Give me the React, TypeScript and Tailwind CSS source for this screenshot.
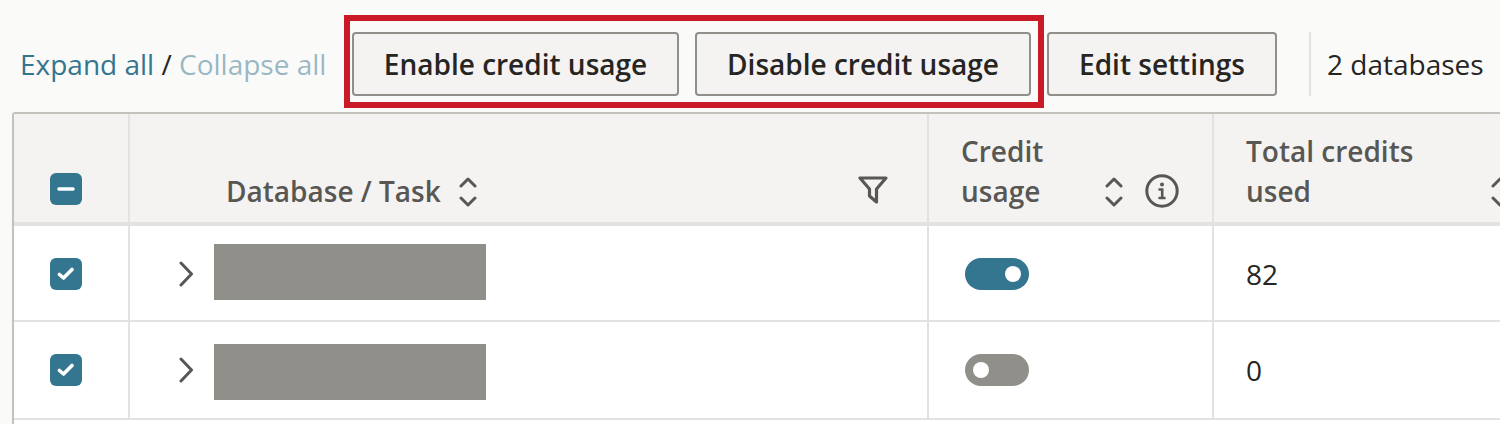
const font = { fontFamily: '"Open Sans", sans-serif' };

function SortIcon() {
  return (
    <svg width="18" height="32" viewBox="0 0 18 32" fill="none" stroke="#585754" strokeWidth="3" strokeLinecap="round" strokeLinejoin="round">
      <path d="M2 10 L9 3 L16 10" />
      <path d="M2 22 L9 29 L16 22" />
    </svg>
  );
}

function FilterIcon() {
  return (
    <svg width="30" height="28" viewBox="0 0 30 28" fill="none" stroke="#585754" strokeWidth="3.2" strokeLinecap="round" strokeLinejoin="round">
      <path d="M2 2 H28 L18.5 13 V26 L11.5 20 V13 Z" />
    </svg>
  );
}

function InfoIcon() {
  return (
    <svg width="34" height="34" viewBox="0 0 34 34" fill="none" stroke="#585754" strokeLinecap="round">
      <circle cx="17" cy="17" r="15.2" strokeWidth="3" />
      <circle cx="17" cy="10.5" r="2" fill="#585754" stroke="none" />
      <path d="M14.5 15.5 H17.2 V23.5 M14.5 24 H19.5" strokeWidth="2.6" />
    </svg>
  );
}

function Checkbox({ mixed }: { mixed?: boolean }) {
  return (
    <div className="flex h-8 w-8 items-center justify-center rounded-md bg-[#34758f]">
      <svg width="18" height="16" viewBox="0 0 18 16" fill="none" stroke="white" strokeWidth="3.6" strokeLinecap="round" strokeLinejoin="round">
        {mixed ? <path d="M2 8 H16" /> : <path d="M2.5 8.5 L6.5 12 L15 3.5" />}
      </svg>
    </div>
  );
}

function Toggle({ on }: { on?: boolean }) {
  return (
    <div className={on ? 'flex h-8 w-16 items-center justify-end rounded-full bg-[#34758f] px-2' : 'flex h-8 w-16 items-center justify-start rounded-full bg-[#908f89] px-2'}>
      <div className="h-4 w-4 rounded-full bg-white" />
    </div>
  );
}

function Button({ label, width }: { label: string; width: string }) {
  return (
    <button className={`${width} h-16 rounded-[4px] border-2 border-[#908f89] bg-[#f4f3f2] text-[28px] font-semibold text-[#262522]`}>
      {label}
    </button>
  );
}

function Row({ on, value, height, cell, block }: { on?: boolean; value: string; height: string; cell: string; block: string }) {
  return (
    <div className={`grid grid-cols-[116px_799px_285px_300px] border-b-2 border-[#e3e2e0] bg-white ${height}`}>
      <div className={`flex items-center border-r-2 border-[#e3e2e0] pl-9 ${cell}`}>
        <Checkbox />
      </div>
      <div className={`flex items-center border-r-2 border-[#e3e2e0] pl-[49px] ${cell}`}>
        <svg width="16" height="26" viewBox="0 0 16 26" fill="none" stroke="#585754" strokeWidth="3" strokeLinecap="round" strokeLinejoin="round">
          <path d="M2 2 L12.5 13 L2 24" />
        </svg>
        <div className={`ml-[19px] h-14 w-[272px] bg-[#908f89] ${block}`} />
      </div>
      <div className={`flex items-center border-r-2 border-[#e3e2e0] pl-9 ${cell}`}>
        <Toggle on={on} />
      </div>
      <div className={`flex items-center pl-8 text-[28px] text-[#262522] ${cell}`}>{value}</div>
    </div>
  );
}

export default function App() {
  return (
    <div className="h-[424px] w-[1500px] overflow-hidden bg-[#fafaf9]" style={font}>
      {/* Toolbar */}
      <div className="flex h-28 items-start">
        <div className="mt-[44px] ml-5 w-[324px] text-[28px] leading-10 whitespace-nowrap">
          <span className="text-[#34758f]">Expand all</span>
          <span className="text-[#262522]"> / </span>
          <span className="text-[#34758f]/50">Collapse all</span>
        </div>
        <div className="mt-[15px] flex h-[93px] w-[700px] gap-4 border-[6px] border-[#cb1a27] pt-[11px] pl-[2px]">
          <Button label="Enable credit usage" width="w-[327px]" />
          <Button label="Disable credit usage" width="w-[336px]" />
        </div>
        <div className="mt-8 ml-[3px]">
          <Button label="Edit settings" width="w-[230px]" />
        </div>
        <div className="mt-8 ml-8 h-16 w-[2px] bg-[#e3e2e0]" />
        <div className="mt-[44px] ml-4 text-[28px] leading-10 whitespace-nowrap text-[#262522]">2 databases</div>
      </div>

      {/* Table */}
      <div className="ml-3 w-[1520px] rounded-tl-[3px] border-t-2 border-l-2 border-[#c4c2bc]">
        <div className="grid h-28 grid-cols-[116px_799px_285px_300px] border-b-4 border-[#e3e2e0] bg-[#f4f3f2] text-[28px] leading-10 font-semibold text-[#585754]">
          <div className="flex items-end border-r-2 border-[#e3e2e0] pb-[17px] pl-9">
            <Checkbox mixed />
          </div>
          <div className="flex items-end border-r-2 border-[#e3e2e0] pr-[39px] pb-[11px] pl-24">
            <span>Database / Task</span>
            <span className="mb-[3px] ml-[18px]"><SortIcon /></span>
            <span className="mb-[7px] ml-auto"><FilterIcon /></span>
          </div>
          <div className="flex items-end border-r-2 border-[#e3e2e0] pb-[11px] pl-8">
            <span className="w-[144px]">Credit<br />usage</span>
            <span className="mb-[3px]"><SortIcon /></span>
            <span className="mb-[3px] ml-[22px]"><InfoIcon /></span>
          </div>
          <div className="flex items-end pb-[11px] pl-8">
            <span className="w-[245px]">Total credits<br />used</span>
            <span className="mb-[3px]"><SortIcon /></span>
          </div>
        </div>
        <Row on value="82" height="h-24" cell="pt-[2px]" block="mb-[4px]" />
        <Row value="0" height="h-[98px]" cell="" block="mt-[4px]" />
        <div className="h-4 bg-white" />
      </div>
    </div>
  );
}
